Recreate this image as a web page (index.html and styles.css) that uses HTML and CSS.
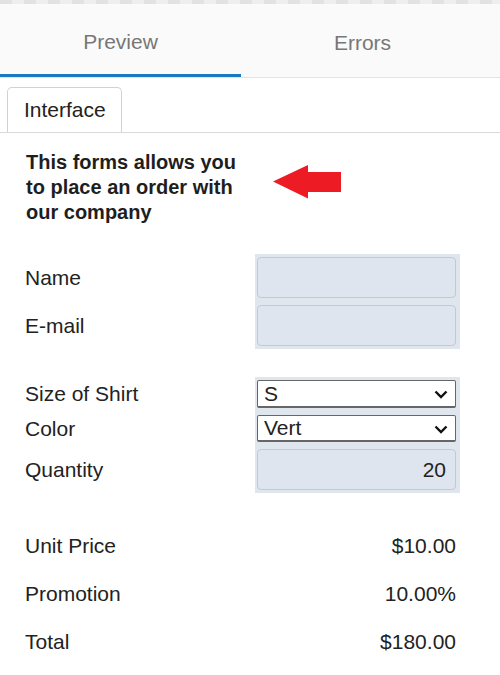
FILE: index.html
```html
<!DOCTYPE html>
<html>
<head>
<meta charset="utf-8">
<link rel="stylesheet" href="styles.css">
</head>
<body>
<div class="checker"></div>
<div class="tabs">
  <div class="tab active">Preview</div>
  <div class="tab">Errors</div>
</div>
<div class="subtabs">
  <div class="subtab">Interface</div>
</div>
<div class="content">
  <div class="intro">
    <div class="heading">This forms allows you to place an order with our company</div>
    <svg class="arrow" width="69" height="34" viewBox="0 0 69 34"><polygon points="0,16.5 35,0 35,7 68,7 68,27 35,27 35,33.5" fill="#ed1c24"/></svg>
  </div>
  <div class="group g1">
    <div class="labels">
      <div class="label tall">Name</div>
      <div class="label tall">E-mail</div>
    </div>
    <div class="controls">
      <input class="field" type="text">
      <input class="field" type="text">
    </div>
  </div>
  <div class="group g2">
    <div class="labels">
      <div class="label sel1">Size of Shirt</div>
      <div class="label sel2">Color</div>
      <div class="label tall">Quantity</div>
    </div>
    <div class="controls">
      <div class="selwrap sel1"><select class="select"><option>S</option></select><svg class="chev" width="14" height="9" viewBox="0 0 14 9"><path d="M1.5 1.5 L7 7 L12.5 1.5" fill="none" stroke="#111" stroke-width="2.4"/></svg></div>
      <div class="selwrap sel2"><select class="select"><option>Vert</option></select><svg class="chev" width="14" height="9" viewBox="0 0 14 9"><path d="M1.5 1.5 L7 7 L12.5 1.5" fill="none" stroke="#111" stroke-width="2.4"/></svg></div>
      <input class="field num" type="text" value="20">
    </div>
  </div>
  <div class="summary">
    <div class="row"><span>Unit Price</span><span>$10.00</span></div>
    <div class="row"><span>Promotion</span><span>10.00%</span></div>
    <div class="row"><span>Total</span><span>$180.00</span></div>
  </div>
</div>
</body>
</html>
```
FILE: styles.css
```css
html, body {
  margin: 0;
  padding: 0;
  background: #ffffff;
  font-family: "Liberation Sans", Arial, sans-serif;
  color: #222;
}
.checker {
  height: 4px;
  background: repeating-linear-gradient(90deg, #e2e2e2 0 12px, #eeeeee 12px 24px);
}
.tabs {
  display: flex;
  height: 74px;
  background: #fafafa;
  border-bottom: 1px solid #e3e3e3;
  box-sizing: border-box;
}
.tab {
  flex: 1;
  display: flex;
  align-items: center;
  justify-content: center;
  font-size: 21px;
  color: #777;
  box-sizing: border-box;
  padding-top: 5px;
}
.tab.active {
  flex: 0 0 241px;
  border-bottom: 3px solid #1a7abf;
}
.tab:not(.active) {
  padding-right: 16px;
}
.subtabs {
  padding: 9px 0 0 7px;
  border-bottom: 1px solid #d9d9d9;
  height: 45px;
}
.subtab {
  width: 115px;
  height: 45px;
  box-sizing: border-box;
  border: 1px solid #d2d2d2;
  border-bottom: none;
  border-radius: 5px 5px 0 0;
  font-size: 21px;
  color: #222;
  padding-left: 16px;
  display: flex;
  align-items: center;
  background: #fff;
}
.content {
  padding-left: 25px;
}
.intro {
  display: flex;
  align-items: flex-start;
  padding-top: 17px;
}
.heading {
  width: 247px;
  padding-right: 20px;
  box-sizing: border-box;
  font-weight: bold;
  font-size: 20px;
  line-height: 25px;
  color: #1e1e1e;
  margin-left: 1px;
}
.arrow {
  margin-top: 15px;
}
.group {
  display: flex;
}
.g1 { margin-top: 29px; }
.g2 { margin-top: 28px; }
.labels {
  width: 230px;
  display: flex;
  flex-direction: column;
  gap: 7px;
  padding: 3px 0;
}
.label {
  display: flex;
  align-items: center;
  font-size: 21px;
  color: #222;
}
.label.tall { height: 41px; }
.label.sel1 { height: 28px; }
.label.sel2 { height: 27px; }
.controls {
  width: 205px;
  box-sizing: border-box;
  background: #e0e6ee;
  padding: 3px 4px 3px 2px;
  display: flex;
  flex-direction: column;
  gap: 7px;
}
.field {
  display: block;
  height: 41px;
  width: 100%;
  box-sizing: border-box;
  margin: 0;
  border: 1.5px solid #c6c8cb;
  border-radius: 4px;
  background: #dee5ee;
  font-family: "Liberation Sans", Arial, sans-serif;
  font-size: 21px;
  color: #222;
  padding: 0 9px;
}
.field.num { text-align: right; }
.selwrap {
  position: relative;
}
.selwrap.sel1 { height: 28px; }
.selwrap.sel2 { height: 27px; }
.select {
  appearance: none;
  -webkit-appearance: none;
  display: block;
  width: 100%;
  height: 100%;
  box-sizing: border-box;
  margin: 0;
  border: 1px solid #666;
  border-bottom-width: 2px;
  border-radius: 2px;
  background: #fff;
  font-family: "Liberation Sans", Arial, sans-serif;
  font-size: 21px;
  color: #222;
  padding: 0 6px;
  line-height: 24px;
}
.chev {
  position: absolute;
  right: 8px;
  top: 50%;
  margin-top: -4px;
  pointer-events: none;
}
.summary {
  margin-top: 29px;
  width: 431px;
}
.row {
  display: flex;
  justify-content: space-between;
  align-items: center;
  height: 48px;
  font-size: 21px;
  color: #222;
}
```
